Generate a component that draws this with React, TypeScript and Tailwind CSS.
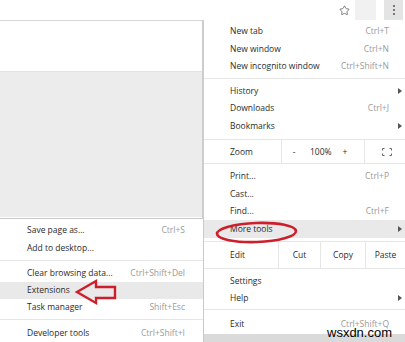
import React from "react";
import { Star } from "lucide-react";

function Tri() {
  return (
    <svg width="4" height="6" viewBox="0 0 4 6" className="block">
      <path d="M0 0 L4 3 L0 6 Z" fill="#555" />
    </svg>
  );
}

type RowProps = {
  label: string;
  shortcut?: string;
  arrow?: boolean;
  hl?: boolean;
  h?: string;
};

function Row({ label, shortcut, arrow, hl, h = "h-[17.3px]" }: RowProps) {
  return (
    <div className={`flex items-center ${h} pl-[26px] pr-[5px] ${hl ? "bg-[#e9e9e9]" : ""}`}>
      <span className="flex-1 text-[#2b2b2b]">{label}</span>
      {shortcut && <span className="mr-[13px] text-[#9a9a9a]">{shortcut}</span>}
      {arrow && <Tri />}
    </div>
  );
}

function SubRow({ label, shortcut, hl }: RowProps) {
  return (
    <div className={`flex items-center h-[17.3px] pl-[27px] pr-[18px] ${hl ? "bg-[#e9e9e9]" : ""}`}>
      <span className="flex-1 text-[#2b2b2b]">{label}</span>
      {shortcut && <span className="text-[#9a9a9a]">{shortcut}</span>}
    </div>
  );
}

function Sep() {
  return <div className="h-px bg-[#e6e6e6]" />;
}

export default function App() {
  return (
    <div className="relative w-[405px] h-[342px] overflow-hidden bg-white font-['Open_Sans',sans-serif] text-[8.5px]">
      {/* page underneath */}
      <div className="flex flex-col h-full">
        <div className="h-[21px] flex items-center justify-end border-b border-[#d6d6d6]">
          <Star size={11} strokeWidth={1.6} color="#555" />
          <div className="w-[5px]" />
          <div className="w-[21px] h-[21px] bg-[#f1f1f1]" />
          <div className="w-[8px]" />
          <div className="w-[19px] h-[21px] bg-[#e4e4e4] flex flex-col items-center justify-center gap-[2px]">
            <div className="w-[2px] h-[2px] bg-[#555] rounded-full" />
            <div className="w-[2px] h-[2px] bg-[#555] rounded-full" />
            <div className="w-[2px] h-[2px] bg-[#555] rounded-full" />
          </div>
          <div className="w-[2px]" />
        </div>
        <div className="h-[50px]" />
        <div className="w-[202px] h-[146px] bg-[#ececec] border-t border-[#e4e4e4]" />
        <div className="flex-1" />
        <div className="h-[8px] bg-[#dadada]" />
      </div>

      {/* main menu */}
      <div className="absolute left-[202px] top-[20px] w-[205px] bg-white border-l-2 border-[#cdcdcd]">
        <div className="pt-[3px] pb-[3px]">
          <Row label="New tab" shortcut="Ctrl+T" />
          <Row label="New window" shortcut="Ctrl+N" />
          <Row label="New incognito window" shortcut="Ctrl+Shift+N" />
        </div>
        <Sep />
        <div className="pt-[3.5px] pb-[4.5px]">
          <Row label="History" arrow h="h-[17.5px]" />
          <Row label="Downloads" shortcut="Ctrl+J" h="h-[17.5px]" />
          <Row label="Bookmarks" arrow h="h-[17.5px]" />
        </div>
        <Sep />
        <div className="flex items-stretch h-[23px]">
          <div className="w-[77px] pl-[26px] flex items-center text-[#2b2b2b]">Zoom</div>
          <div className="w-[84px] border-l border-r border-[#e6e6e6] flex items-center text-[#2b2b2b]">
            <span className="ml-[10px] w-[4px] text-center">-</span>
            <span className="ml-[14px]">100%</span>
            <span className="ml-[11px]">+</span>
          </div>
          <div className="flex-1 flex items-center pl-[17px]">
            <svg width="10" height="8" viewBox="0 0 10 8" fill="none" stroke="#666" strokeWidth="1">
              <path d="M0.5 2.5 V0.5 H2.5 M7.5 0.5 H9.5 V2.5 M9.5 5.5 V7.5 H7.5 M2.5 7.5 H0.5 V5.5" />
            </svg>
          </div>
        </div>
        <Sep />
        <div className="pt-[3.5px] pb-[3.5px]">
          <Row label="Print..." shortcut="Ctrl+P" h="h-[17.5px]" />
          <Row label="Cast..." h="h-[17.5px]" />
          <Row label="Find..." shortcut="Ctrl+F" h="h-[17.5px]" />
          <Row label="More tools" arrow hl h="h-[17.5px]" />
        </div>
        <Sep />
        <div className="flex items-stretch h-[25.5px] text-[#2b2b2b]">
          <div className="w-[74px] pl-[26px] flex items-center">Edit</div>
          <div className="w-[42px] border-l border-[#e6e6e6] flex items-center justify-center">Cut</div>
          <div className="w-[45px] border-l border-[#e6e6e6] flex items-center justify-center">Copy</div>
          <div className="flex-1 border-l border-[#e6e6e6] flex items-center justify-center pr-[2px]">Paste</div>
        </div>
        <Sep />
        <div className="pt-[3.5px] pb-[3px]">
          <Row label="Settings" h="h-[17px]" />
          <Row label="Help" arrow h="h-[17px]" />
        </div>
        <Sep />
        <div className="pt-[5px] pb-[1.5px]">
          <Row label="Exit" shortcut="Ctrl+Shift+Q" h="h-[17px]" />
        </div>
      </div>

      {/* More tools ellipse */}
      <svg className="absolute left-0 top-0 pointer-events-none" width="405" height="342">
        <ellipse cx="256.5" cy="232.5" rx="39.5" ry="9.5" fill="none" stroke="#cc1f2b" strokeWidth="2.6" transform="rotate(-2 256.5 232.5)" />
      </svg>

      {/* submenu */}
      <div className="absolute left-0 top-[218px] w-[204px] bg-white border-t border-r border-[#c9c9c9]">
        <div className="pt-[3px] pb-[3px]">
          <SubRow label="Save page as..." shortcut="Ctrl+S" />
          <SubRow label="Add to desktop..." />
        </div>
        <Sep />
        <div className="pt-[4px] pb-[3px]">
          <SubRow label="Clear browsing data..." shortcut="Ctrl+Shift+Del" />
          <SubRow label="Extensions" hl />
          <SubRow label="Task manager" shortcut="Shift+Esc" />
        </div>
        <Sep />
        <div className="pt-[4px] pb-[3px]">
          <SubRow label="Developer tools" shortcut="Ctrl+Shift+I" />
        </div>
      </div>

      {/* arrow */}
      <svg className="absolute left-0 top-0 pointer-events-none" width="405" height="342">
        <polygon points="77,292 96,281 96,287 115,287 115,298 96,298 96,303" fill="none" stroke="#cc1f2b" strokeWidth="2.4" strokeLinejoin="miter" />
      </svg>

      {/* watermark */}
      <div className="absolute left-[327px] top-[327px] leading-[12px] font-['Liberation_Sans',sans-serif] text-[13px] text-black">
        wsxdn.com
      </div>
    </div>
  );
}
